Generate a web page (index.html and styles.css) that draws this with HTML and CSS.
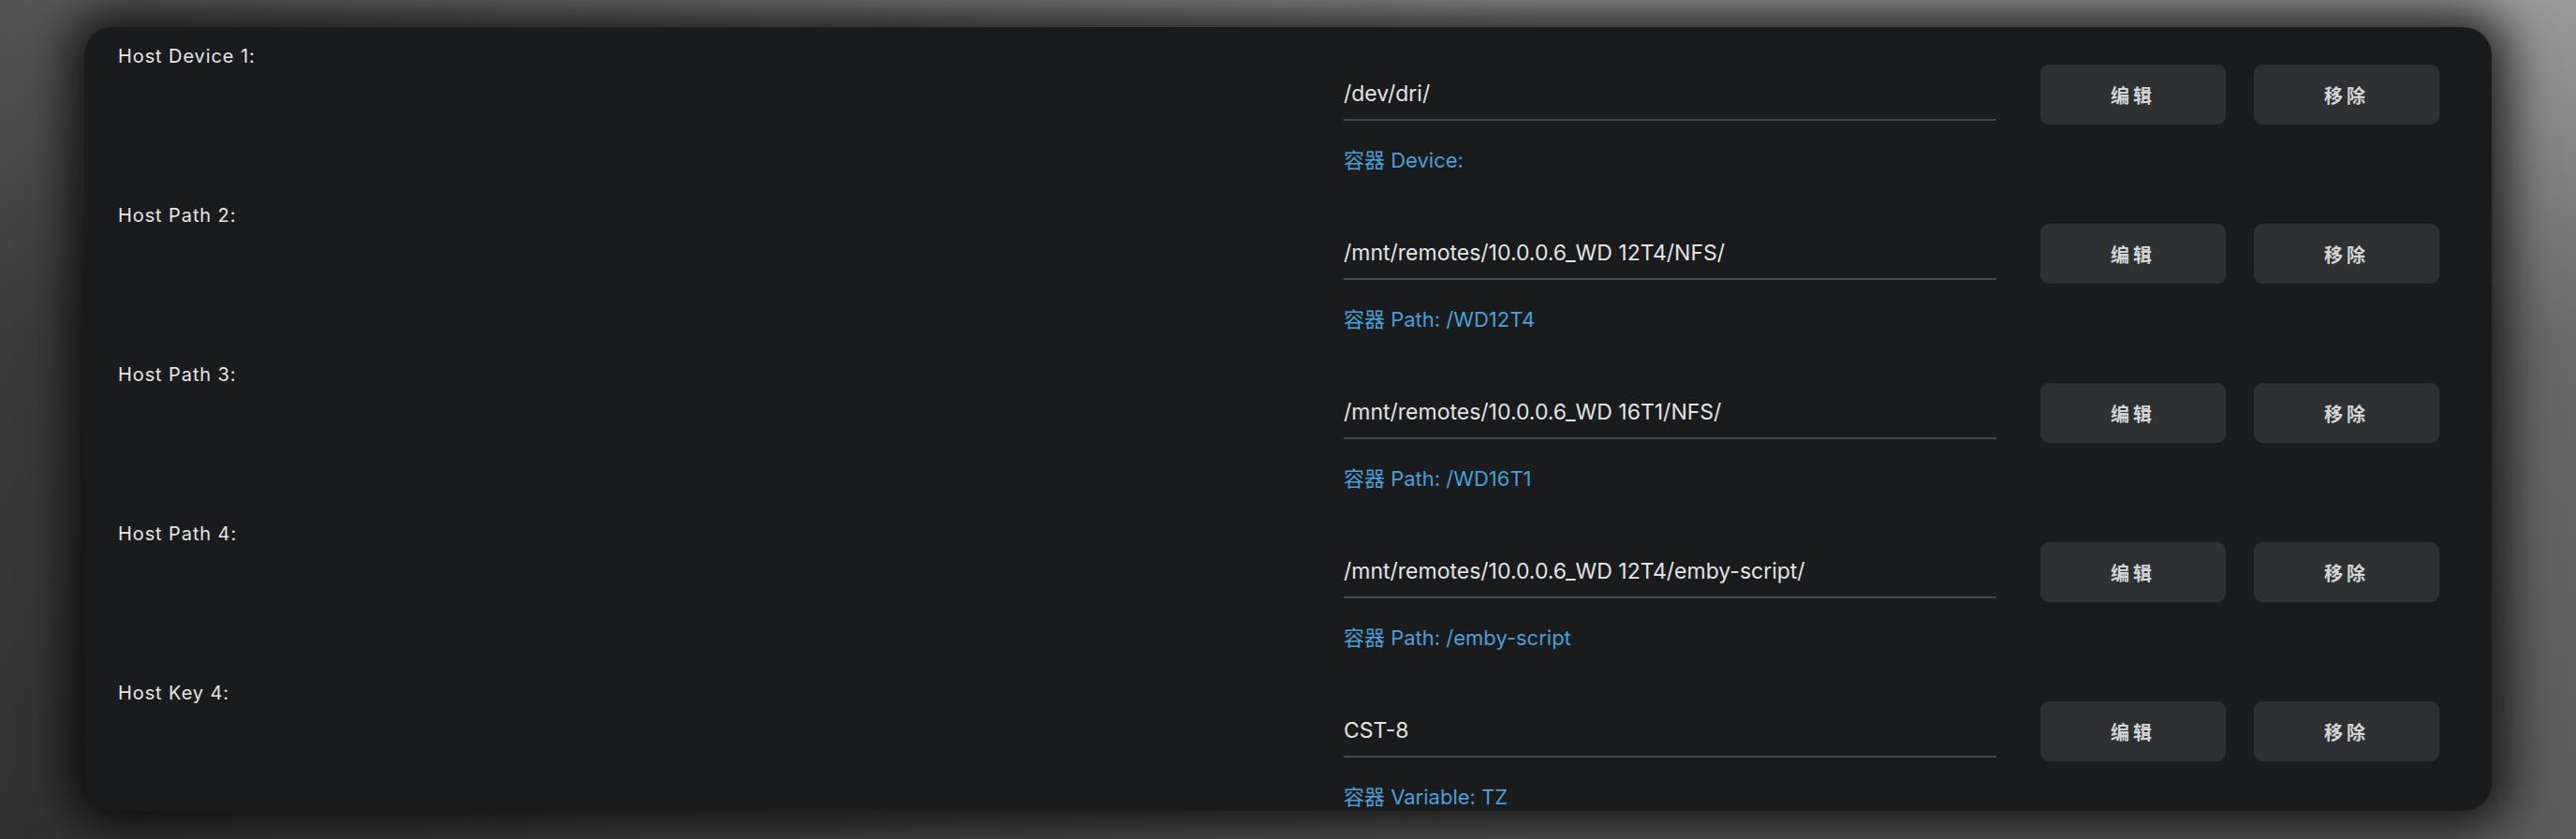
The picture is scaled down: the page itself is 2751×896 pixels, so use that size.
FILE: index.html
```html
<!DOCTYPE html>
<html lang="zh-CN">
<head>
    <meta charset="UTF-8">
    <title>Container Mappings</title>
    <link rel="stylesheet" href="styles.css">
</head>
<body>
    <div class="panel">
        <div class="mapping">
            <div class="mapping-label">Host Device 1:</div>
            <div class="mapping-field">
                <div class="mapping-value">/dev/dri/</div>
                <div class="mapping-target">容器 Device:</div>
            </div>
            <div class="mapping-actions">
                <button class="btn">编辑</button>
                <button class="btn">移除</button>
            </div>
        </div>
        <div class="mapping">
            <div class="mapping-label">Host Path 2:</div>
            <div class="mapping-field">
                <div class="mapping-value">/mnt/remotes/10.0.0.6_WD 12T4/NFS/</div>
                <div class="mapping-target">容器 Path: /WD12T4</div>
            </div>
            <div class="mapping-actions">
                <button class="btn">编辑</button>
                <button class="btn">移除</button>
            </div>
        </div>
        <div class="mapping">
            <div class="mapping-label">Host Path 3:</div>
            <div class="mapping-field">
                <div class="mapping-value">/mnt/remotes/10.0.0.6_WD 16T1/NFS/</div>
                <div class="mapping-target">容器 Path: /WD16T1</div>
            </div>
            <div class="mapping-actions">
                <button class="btn">编辑</button>
                <button class="btn">移除</button>
            </div>
        </div>
        <div class="mapping">
            <div class="mapping-label">Host Path 4:</div>
            <div class="mapping-field">
                <div class="mapping-value">/mnt/remotes/10.0.0.6_WD 12T4/emby-script/</div>
                <div class="mapping-target">容器 Path: /emby-script</div>
            </div>
            <div class="mapping-actions">
                <button class="btn">编辑</button>
                <button class="btn">移除</button>
            </div>
        </div>
        <div class="mapping">
            <div class="mapping-label">Host Key 4:</div>
            <div class="mapping-field">
                <div class="mapping-value">CST-8</div>
                <div class="mapping-target">容器 Variable: TZ</div>
            </div>
            <div class="mapping-actions">
                <button class="btn">编辑</button>
                <button class="btn">移除</button>
            </div>
        </div>
    </div>
</body>
</html>
```

FILE: styles.css
```css
* {
    margin: 0;
    padding: 0;
    box-sizing: border-box;
}

html, body {
    height: 100%;
}

body {
    padding: 29px 90px 0;
    overflow: hidden;
    background-color: #5e5e5e;
    background-image:
        linear-gradient(to right, rgba(0, 0, 0, 0.45), rgba(0, 0, 0, 0) 60%),
        linear-gradient(to bottom, #9a9a9a, #6a6a6a 40%, #5a5a5a);
    font-family: Inter, "Noto Sans CJK SC", sans-serif;
}

.panel {
    height: 837px;
    padding: 19px 56px 0 36px;
    overflow: hidden;
    background-color: #1a1b1d;
    border-radius: 30px;
    box-shadow: 0 0 50px 18px rgba(0, 0, 0, 0.75);
}

.mapping {
    display: grid;
    grid-template-columns: 1fr 697px auto;
    column-gap: 47px;
    align-items: start;
    margin-bottom: 33px;
}

.mapping-label {
    font-size: 20px;
    line-height: 24px;
    letter-spacing: 0.9px;
    color: #e6e6e6;
}

.mapping-field {
    margin-top: 38px;
}

.mapping-value {
    padding-bottom: 12px;
    border-bottom: 2px solid #47484a;
    font-size: 23px;
    line-height: 29px;
    color: #e4e4e4;
}

.mapping-target {
    margin-top: 28px;
    font-size: 22px;
    line-height: 28px;
    color: #4aa0d8;
}

.mapping-actions {
    display: flex;
    gap: 30px;
    margin-top: 21px;
}

.btn {
    width: 198px;
    height: 64px;
    border: none;
    border-radius: 9px;
    background-color: #2e3134;
    color: #d6d6d6;
    font-family: "Noto Sans CJK SC", sans-serif;
    font-size: 20px;
    font-weight: bold;
    letter-spacing: 4px;
    cursor: pointer;
}
```
